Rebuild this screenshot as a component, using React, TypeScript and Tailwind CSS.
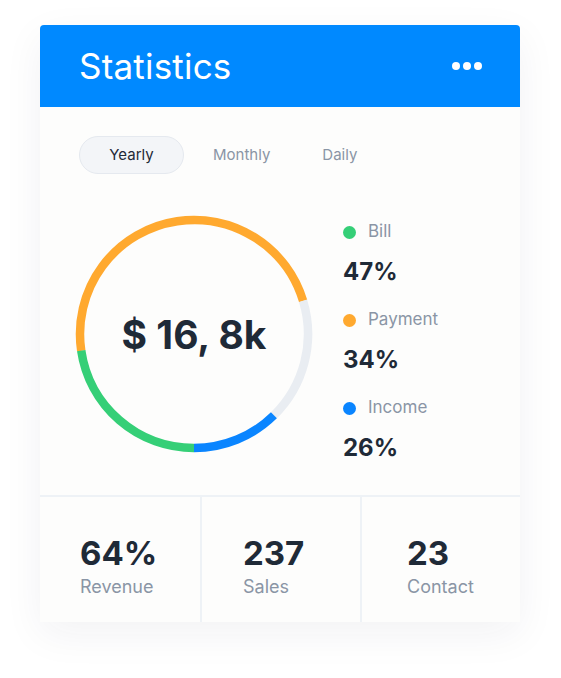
import React from "react";

const C = 2 * Math.PI * 114;

function Donut() {
  const segs: [number, number, string][] = [
    [171.5, 171.5, "#ffa92f"],
    [343, 62.5, "#e9edf2"],
    [45.5, 44.5, "#0a85ff"],
    [90, 81.5, "#35cf77"],
  ];
  return (
    <svg width="240" height="240" viewBox="0 0 240 240" className="shrink-0">
      {segs.map(([start, sweep, color], i) => (
        <circle
          key={i}
          cx="120"
          cy="120"
          r="114"
          fill="none"
          stroke={color}
          strokeWidth="8.5"
          strokeDasharray={`${(sweep / 360) * C} ${C}`}
          transform={`rotate(${start} 120 120)`}
        />
      ))}
      <text
        x="120"
        y="135"
        textAnchor="middle"
        fill="#1f2a37"
        style={{ fontFamily: "Inter, sans-serif", fontWeight: 700, fontSize: "39px" }}
      >
        $ 16, 8k
      </text>
    </svg>
  );
}

function LegendItem({ color, label, value }: { color: string; label: string; value: string }) {
  return (
    <div className="flex flex-col">
      <div className="flex items-center h-[24px]">
        <span className="w-[13px] h-[13px] rounded-full" style={{ background: color }} />
        <span className="ml-[12px] text-[17px] text-[#8a95a5]">{label}</span>
      </div>
      <div className="mt-[13px] h-[30px] leading-[30px] text-[24px] font-bold text-[#1f2a37]">{value}</div>
    </div>
  );
}

function Stat({ value, label, cls }: { value: string; label: string; cls: string }) {
  return (
    <div className={`flex flex-col pt-[36px] ${cls}`}>
      <div className="h-[40px] leading-[40px] text-[33px] font-bold text-[#1f2a37]">{value}</div>
      <div className="mt-[2px] h-[24px] leading-[24px] text-[18px] text-[#8a95a5]">{label}</div>
    </div>
  );
}

export default function App() {
  return (
    <div className="w-[561px] h-[678px] bg-white pt-[25px] pl-[40px]" style={{ fontFamily: "Inter, sans-serif" }}>
      <div className="w-[480px] bg-[#fdfdfc] rounded-t-[4px] shadow-[0_12px_40px_rgba(30,40,60,0.06)]">
        <div className="h-[82px] bg-[#0089ff] rounded-t-[4px] flex items-center justify-between pl-[39px] pr-[38px]">
          <div className="text-[35px] text-white tracking-[0.2px]">Statistics</div>
          <div className="flex gap-[3px]">
            <span className="w-[8px] h-[8px] rounded-full bg-white" />
            <span className="w-[8px] h-[8px] rounded-full bg-white" />
            <span className="w-[8px] h-[8px] rounded-full bg-white" />
          </div>
        </div>
        <div className="pt-[29px] pb-[41px] border-b-2 border-[#eef2f6]">
          <div className="flex items-center pl-[39px] text-[15px]">
            <div className="w-[105px] h-[38px] rounded-full bg-[#f3f5f8] border border-[#e5e9ef] flex items-center justify-center text-[#1f2a37]">
              Yearly
            </div>
            <div className="ml-[29px] text-[#8a95a5]">Monthly</div>
            <div className="ml-[52px] text-[#8a95a5]">Daily</div>
          </div>
          <div className="flex h-[240px] mt-[40px] pl-[34px]">
            <Donut />
            <div className="ml-[29px] mt-[6px] flex flex-col gap-[21px]">
              <LegendItem color="#35cf77" label="Bill" value="47%" />
              <LegendItem color="#ffa92f" label="Payment" value="34%" />
              <LegendItem color="#0a85ff" label="Income" value="26%" />
            </div>
          </div>
        </div>
        <div className="flex h-[125px]">
          <Stat value="64%" label="Revenue" cls="w-[160px] pl-[40px]" />
          <div className="w-[2px] bg-[#eef2f6]" />
          <Stat value="237" label="Sales" cls="w-[158px] pl-[41px]" />
          <div className="w-[2px] bg-[#eef2f6]" />
          <Stat value="23" label="Contact" cls="flex-1 pl-[45px]" />
        </div>
      </div>
    </div>
  );
}
